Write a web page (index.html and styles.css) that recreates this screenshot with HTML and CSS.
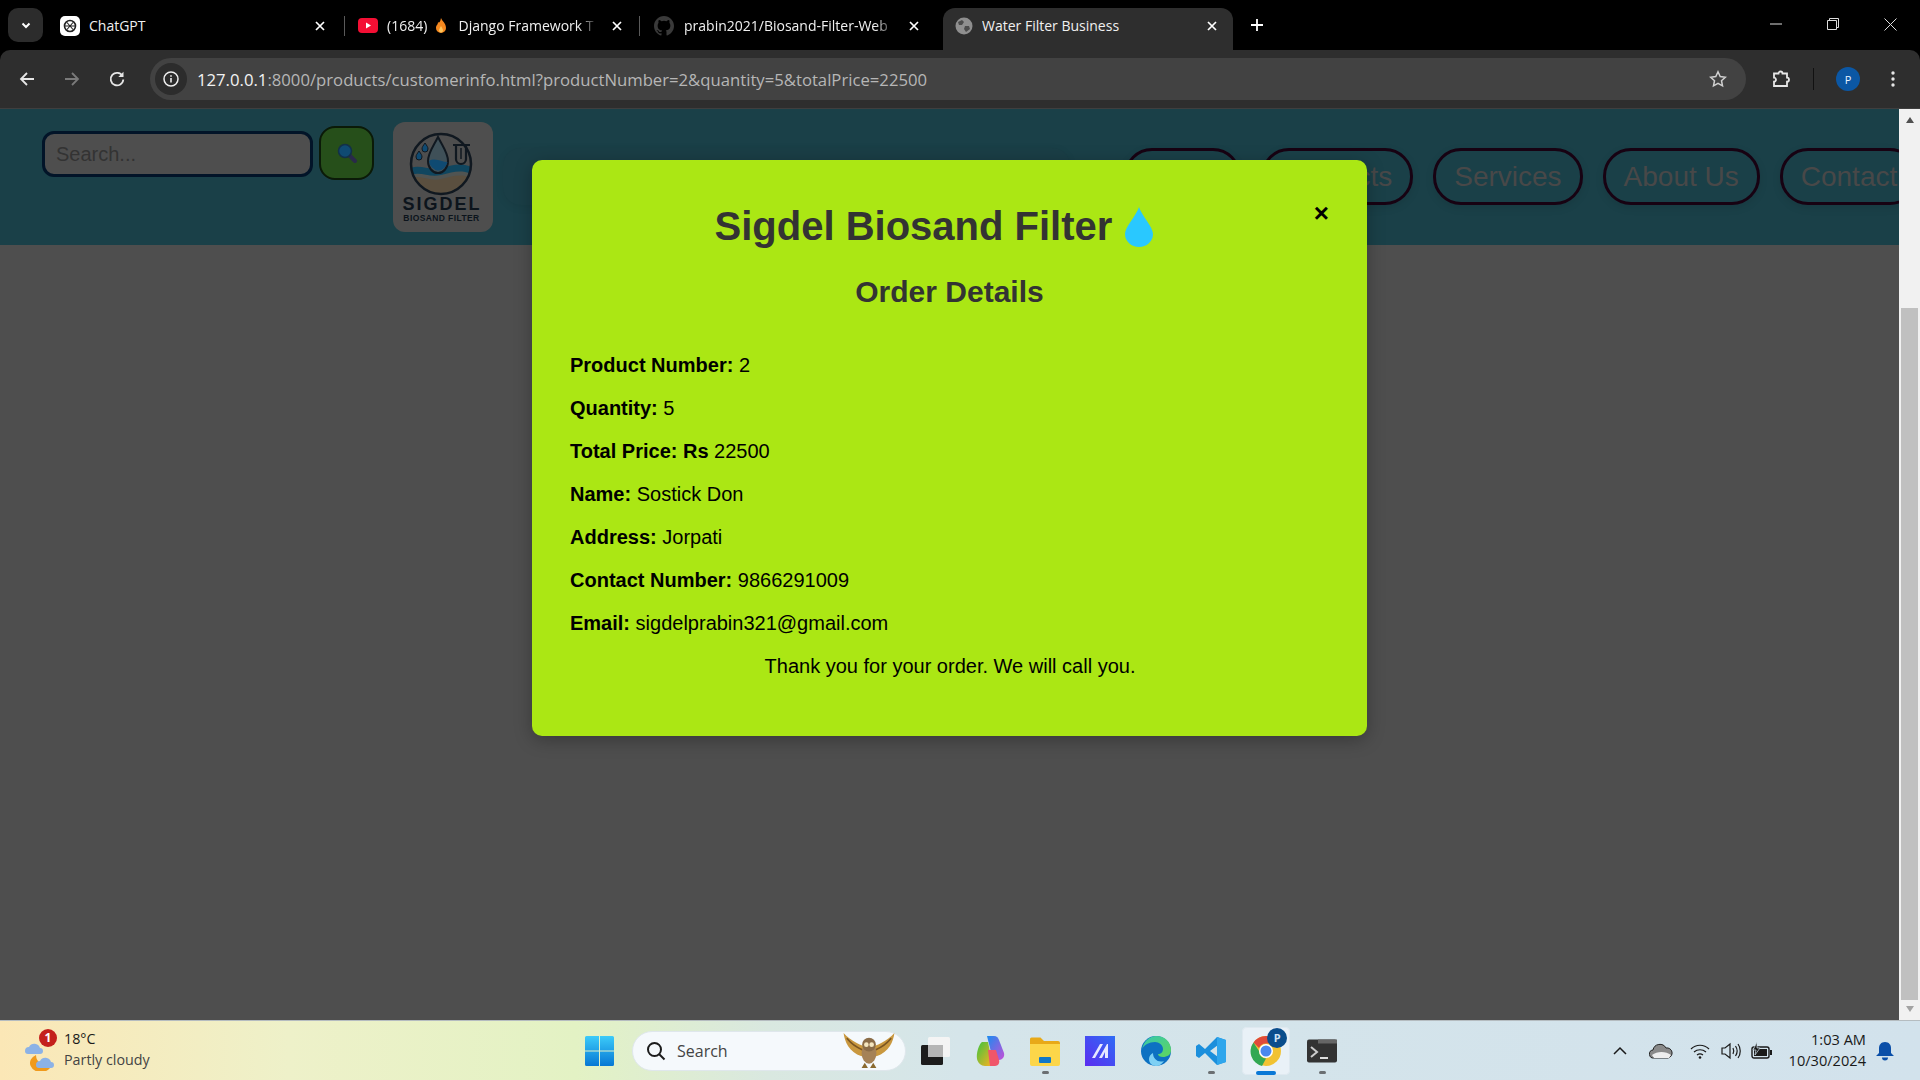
FILE: index.html
```html
<!DOCTYPE html>
<html lang="en">
<head>
<meta charset="utf-8">
<title>Water Filter Business</title>
<link rel="stylesheet" href="styles.css">
</head>
<body>
<div class="screen">
  <div class="tabstrip">
    <div class="tab-menu"><svg width="12" height="12" viewBox="0 0 12 12"><path d="M2.5 4.5 6 8l3.5-3.5" fill="none" stroke="#fff" stroke-width="2"/></svg></div>
    <div class="tab tab-1">
      <svg class="fav" width="20" height="20" viewBox="0 0 20 20"><rect width="20" height="20" rx="5" fill="#fff"/><circle cx="10" cy="10" r="5.5" fill="none" stroke="#222" stroke-width="1.6"/><path d="M7 6.5 13 13.5M13 6.500 7 13.500M5 10h10" stroke="#222" stroke-width="1.1"/></svg>
      <span class="tab-title">ChatGPT</span>
      <svg class="x" width="12" height="12" viewBox="0 0 12 12"><path d="M2 2l8 8M10 2l-8 8" stroke="#fff" stroke-width="1.700"/></svg>
    </div>
    <div class="tab-sep"></div>
    <div class="tab tab-2">
      <svg class="fav" width="20" height="15" viewBox="0 0 20 15"><rect width="20" height="15" rx="4" fill="#f40f34"/><path d="M8 4.500 13 7.500 8 10.500z" fill="#fff"/></svg>
      <span class="tab-title fade">(1684) <svg class="flame" width="12" height="16" viewBox="0 0 12 16"><path d="M6 0c1 3 5 5 5 10a5 5 0 0 1-10 0C1 7 3 7 3 4c1 1 2 1 3-4z" fill="#f5881f"/><path d="M6 8c1 2 2 3 2 4.500a2 2 0 0 1-4 0C4 11 5 10 6 8z" fill="#fdc45a"/></svg> Django Framework T</span>
      <svg class="x x-gap" width="12" height="12" viewBox="0 0 12 12"><path d="M2 2l8 8M10 2l-8 8" stroke="#fff" stroke-width="1.700"/></svg>
    </div>
    <div class="tab-sep"></div>
    <div class="tab tab-3">
      <svg class="fav" width="20" height="20" viewBox="0 0 16 16"><path fill="#3a3a3a" d="M8 0C3.600 0 0 3.600 0 8c0 3.500 2.300 6.500 5.500 7.600.4.100.5-.2.500-.4v-1.400c-2.200.5-2.700-1-2.700-1-.4-.9-.9-1.200-.9-1.200-.7-.5.100-.5.100-.5.800.1 1.200.8 1.200.8.700 1.200 1.900.9 2.300.7.100-.5.300-.9.500-1.100-1.800-.2-3.600-.9-3.600-4 0-.9.300-1.600.8-2.100-.1-.2-.4-1 .1-2.100 0 0 .7-.2 2.200.8a7.600 7.600 0 0 1 4 0c1.500-1 2.200-.8 2.200-.8.400 1.100.200 1.900.1 2.100.5.600.8 1.300.8 2.100 0 3.100-1.900 3.700-3.700 3.900.3.300.6.800.6 1.500v2.200c0 .2.100.5.600.4C13.700 14.500 16 11.500 16 8c0-4.400-3.600-8-8-8z"/></svg>
      <span class="tab-title fade">prabin2021/Biosand-Filter-Web</span>
      <svg class="x x-gap" width="12" height="12" viewBox="0 0 12 12"><path d="M2 2l8 8M10 2l-8 8" stroke="#fff" stroke-width="1.700"/></svg>
    </div>
    <div class="tab tab-active">
      <svg class="fav" width="18" height="18" viewBox="0 0 18 18"><circle cx="9" cy="9" r="8.500" fill="#8f8f8f"/><path d="M3 5l4-2 2 2-2 3-3 0zM10 9l4 0 1 3-4 3-2-3z" fill="#4b4b4b"/></svg>
      <span class="tab-title">Water Filter Business</span>
      <svg class="x" width="12" height="12" viewBox="0 0 12 12"><path d="M2 2l8 8M10 2l-8 8" stroke="#fff" stroke-width="1.700"/></svg>
    </div>
    <svg class="new-tab" width="14" height="14" viewBox="0 0 14 14"><path d="M7 1v12M1 7h12" stroke="#fff" stroke-width="1.800"/></svg>
    <div class="win-controls">
      <svg width="12" height="12" viewBox="0 0 12 12"><path d="M0 6h12" stroke="#ddd" stroke-width="1"/></svg>
      <svg width="12" height="12" viewBox="0 0 12 12"><path d="M.5 2.500h9v9h-9zM2.500 2.500v-2h9v9h-2" fill="none" stroke="#ddd" stroke-width="1"/></svg>
      <svg width="13" height="13" viewBox="0 0 13 13"><path d="M.5.500l12 12M12.500.500l-12 12" stroke="#ddd" stroke-width="1"/></svg>
    </div>
  </div>

  <div class="toolbar">
    <svg class="tool" width="18" height="18" viewBox="0 0 18 18"><path d="M16 9H3M9 3 3 9l6 6" fill="none" stroke="#e6e6e6" stroke-width="1.800"/></svg>
    <svg class="tool" width="18" height="18" viewBox="0 0 18 18"><path d="M2 9h13M9 3l6 6-6 6" fill="none" stroke="#7a7a7a" stroke-width="1.800"/></svg>
    <svg class="tool" width="18" height="18" viewBox="0 0 18 18"><path d="M14.500 6A6.300 6.300 0 1 0 15.300 9.500" fill="none" stroke="#e6e6e6" stroke-width="1.800"/><path d="M15.500 1.800V7H10.300z" fill="#e6e6e6"/></svg>
    <div class="omnibox">
      <span class="site-info"><svg width="16" height="16" viewBox="0 0 16 16"><circle cx="8" cy="8" r="7" fill="none" stroke="#eee" stroke-width="1.500"/><path d="M8 7v4.500M8 4.200v1.600" stroke="#eee" stroke-width="1.600"/></svg></span>
      <span class="url"><span class="url-host">127.0.0.1</span>:8000/products/customerinfo.html?productNumber=2&amp;quantity=5&amp;totalPrice=22500</span>
      <svg class="star" width="18" height="18" viewBox="0 0 18 18"><path d="M9 1.800l2.200 4.800 5.100.6-3.800 3.500 1 5.100L9 13.300l-4.500 2.500 1-5.100L1.700 7.200l5.100-.6z" fill="none" stroke="#d0d0d0" stroke-width="1.500"/></svg>
    </div>
    <svg class="puzzle" width="20" height="20" viewBox="0 0 20 20"><path d="M3 4.500h4.500a2 2 0 0 1 4 0H16v4.200a2 2 0 0 1 0 4V17H3v-4.300a2 2 0 0 0 0-4z" fill="none" stroke="#e6e6e6" stroke-width="1.800"/></svg>
    <div class="tool-sep"></div>
    <div class="avatar">P</div>
    <svg class="kebab" width="4" height="18" viewBox="0 0 4 18"><circle cx="2" cy="3" r="1.700" fill="#e6e6e6"/><circle cx="2" cy="9" r="1.700" fill="#e6e6e6"/><circle cx="2" cy="15" r="1.700" fill="#e6e6e6"/></svg>
  </div>

  <div class="viewport">
    <div class="page">
      <header class="site-header">
        <form class="search">
          <div class="search-input">Search...</div>
          <div class="search-btn"><svg width="22" height="22" viewBox="0 0 22 22"><path d="M13 13l6 6" stroke="#2a2a4a" stroke-width="4" stroke-linecap="round"/><circle cx="9" cy="9" r="6.500" fill="#0f4a72" stroke="#133048" stroke-width="1.500"/></svg></div>
        </form>
        <div class="logo">
          <svg class="logo-mark" width="76" height="78" viewBox="0 0 76 78">
            <defs><clipPath id="lc"><circle cx="38" cy="39" r="29.500"/></clipPath></defs>
            <g clip-path="url(#lc)">
              <path d="M5 44c12-6 20 2 33-1s20-6 33 0v30H5z" fill="#10465f"/>
              <path d="M5 51c12-6 20 2 33-1s20-6 33 0v24H5z" fill="#505452"/>
              <path d="M5 54c12-6 20 3 33 0s20-6 33 0v22H5z" fill="#5a4f3f"/>
            </g>
            <circle cx="38" cy="39" r="30" fill="none" stroke="#101820" stroke-width="2.500"/>
            <path d="M35 12c5 10 10 16 10 24a10 12 0 0 1-20 0c0-8 5-14 10-24z" fill="#3f5058" stroke="#101820" stroke-width="2"/>
            <path d="M26 36c6-4 13 1 18.500 1a9.500 11.500 0 0 1-18.500-1z" fill="#0f4a72"/>
            <path d="M22 18c2 3 3 4 3 6a3 3 0 0 1-6 0c0-2 1-3 3-6zM16 26c2 3 3 4 3 6a3 3 0 0 1-6 0c0-2 1-3 3-6z" fill="#0f4a72" stroke="#101820" stroke-width="1"/>
            <path d="M50 20h17M53 21v13a5 5 0 0 0 10 0V21" fill="none" stroke="#101820" stroke-width="2.200"/>
            <path d="M58 23v11" stroke="#101820" stroke-width="1.500"/>
          </svg>
          <div class="logo-name">SIGDEL</div>
          <div class="logo-sub">BIOSAND FILTER</div>
        </div>
        <div class="ghost-pill"></div>
        <nav class="nav">
          <a class="pill">Home</a>
          <a class="pill">Products</a>
          <a class="pill">Services</a>
          <a class="pill">About Us</a>
          <a class="pill">Contact</a>
        </nav>
      </header>
      <section class="modal">
        <span class="close">×</span>
        <h1 class="modal-title">Sigdel Biosand Filter <svg class="drop" width="30" height="40" viewBox="0 0 30 40"><path d="M15 0c3 9 14 20 14 27a14 13 0 0 1-28 0C1 20 12 9 15 0z" fill="#29c8ff"/></svg></h1>
        <h2 class="modal-sub">Order Details</h2>
        <p class="row first"><strong>Product Number:</strong> 2</p>
        <p class="row"><strong>Quantity:</strong> 5</p>
        <p class="row"><strong>Total Price: Rs</strong> 22500</p>
        <p class="row"><strong>Name:</strong> Sostick Don</p>
        <p class="row"><strong>Address:</strong> Jorpati</p>
        <p class="row"><strong>Contact Number:</strong> 9866291009</p>
        <p class="row"><strong>Email:</strong> sigdelprabin321@gmail.com</p>
        <p class="row thanks">Thank you for your order. We will call you.</p>
      </section>
    </div>
    <div class="scrollbar">
      <svg class="arrow" width="10" height="8" viewBox="0 0 10 8"><path d="M5 1l4 6H1z" fill="#505050"/></svg>
      <div class="track"><div class="thumb"></div></div>
      <svg class="arrow" width="10" height="8" viewBox="0 0 10 8"><path d="M1 1h8L5 7z" fill="#a3a3a3"/></svg>
    </div>
  </div>

  <footer class="taskbar">
    <div class="weather">
      <div class="weather-icon">
        <svg width="34" height="36" viewBox="0 0 34 36"><path d="M12 20a11 9 0 1 0 16 8 10 10 0 0 1-16-8z" fill="#f09a1c"/><path d="M1 16a4 4 0 0 1 4-4 6 6 0 0 1 11 1 3 3 0 0 1 0 6H4a3 3 0 0 1-3-3z" fill="#8cb2e6"/><path d="M12 30a4 4 0 0 1 4-4 6 6 0 0 1 11 1 3 3 0 0 1 0 6H15a3 3 0 0 1-3-3z" fill="#8cb2e6"/></svg>
        <span class="badge">1</span>
      </div>
      <div class="weather-text"><div class="temp">18°C</div><div class="cond">Partly cloudy</div></div>
    </div>
    <div class="apps">
      <svg class="start" width="29" height="30" viewBox="0 0 29 30"><defs><linearGradient id="win" x1="0" y1="0" x2="0" y2="1"><stop offset="0" stop-color="#3ccbf9"/><stop offset="1" stop-color="#0677d4"/></linearGradient></defs><path fill="url(#win)" d="M0 1.500A1.500 1.500 0 0 1 1.500 0H14v14.500H0zM15 0h12.500A1.500 1.500 0 0 1 29 1.500v13H15zM0 15.500h14V30H1.500A1.500 1.500 0 0 1 0 28.500zM15 15.500h14v13a1.500 1.500 0 0 1-1.500 1.500H15z"/></svg>
      <div class="task-search">
        <svg width="20" height="20" viewBox="0 0 20 20"><circle cx="8.500" cy="8.500" r="6.500" fill="none" stroke="#1c1c1c" stroke-width="2"/><path d="M13 13l5.500 5.500" stroke="#1c1c1c" stroke-width="2"/></svg>
        <span class="task-search-label">Search</span>
        <svg class="owl" width="56" height="36" viewBox="0 0 50 34"><path d="M25 14C18 12 8 8 1 0c1 8 5 18 17 22zM25 14c7-2 17-6 24-14-1 8-5 18-17 22z" fill="#c9983f"/><path d="M4 5c5 6 10 9 15 11M46 5c-5 6-10 9-15 11" stroke="#7a5522" stroke-width="1.500" fill="none"/><ellipse cx="25" cy="19" rx="7" ry="10" fill="#a58257"/><circle cx="25" cy="11" r="6.500" fill="#8a6c48"/><circle cx="22.500" cy="11" r="2.200" fill="#f4e6c0"/><circle cx="27.500" cy="11" r="2.200" fill="#f4e6c0"/><path d="M21 28l-3 5h6zM29 28l-3 5h6z" fill="#8a6a30"/></svg>
      </div>
      <div class="app">
        <svg width="30" height="30" viewBox="0 0 30 30"><rect x="1" y="9" width="22" height="20" rx="1.500" fill="#1c1c1c"/><rect x="8" y="1" width="22" height="20" rx="1.500" fill="#f4f4f4"/><rect x="8" y="9" width="15" height="12" fill="#b5b5b5"/></svg>
      </div>
      <div class="app">
        <svg width="30" height="32" viewBox="0 0 30 32"><defs><linearGradient id="cp1" x1="0" y1="0" x2="1" y2="1"><stop offset="0" stop-color="#1a8cf0"/><stop offset="1" stop-color="#c64fd8"/></linearGradient><linearGradient id="cp2" x1="0" y1="0" x2="1" y2="1"><stop offset="0" stop-color="#3ec43e"/><stop offset="1" stop-color="#ffb020"/></linearGradient></defs><path d="M12 1h7c3 0 4 2 5 4l5 13c1 4-2 7-5 7h-6z" fill="url(#cp1)"/><path d="M7 7h6l5 24h-8c-4 0-7-3-8-7-1-6 2-15 5-17z" fill="url(#cp2)"/><path d="M13 15h8l3 10c1 3-1 6-4 6h-5z" fill="#f0566a"/></svg>
      </div>
      <div class="app has-dot">
        <svg width="30" height="30" viewBox="0 0 30 30"><path d="M0 3a1.500 1.500 0 0 1 1.500-1.500h9L14 5h14a2 2 0 0 1 2 2v3H0z" fill="#e8a918"/><path d="M0 8h30v20a2 2 0 0 1-2 2H2a2 2 0 0 1-2-2z" fill="#fcd649"/><rect x="9" y="21" width="12" height="6" rx="1" fill="#1078c8"/></svg>
      </div>
      <div class="app">
        <svg width="30" height="30" viewBox="0 0 30 30"><defs><linearGradient id="mn" x1="1" y1="0" x2="0" y2="1"><stop offset="0" stop-color="#2f6cf5"/><stop offset="1" stop-color="#5b2cf0"/></linearGradient></defs><rect width="30" height="30" fill="url(#mn)"/><path d="M7 22l8-14h3l-8 14zM14 22l8-14h1v14h-3v-6l-3 6z" fill="#e6e8ff"/></svg>
      </div>
      <div class="app">
        <svg width="30" height="30" viewBox="0 0 30 30"><defs><linearGradient id="ed" x1="0" y1="0" x2="1" y2="1"><stop offset="0" stop-color="#36c7b0"/><stop offset="1" stop-color="#5fd65c"/></linearGradient></defs><circle cx="15" cy="15" r="15" fill="#0d71c2"/><path d="M1 13C3 5 9 0 15 0c9 0 15 6 15 14 0 5-4 7-8 7-3 0-5-1-5-3 3 0 5-2 5-5 0-4-4-7-8-7-6 0-11 3-13 7z" fill="url(#ed)"/><path d="M12 17c0 6 5 10 11 8-2 3-5 5-8 5-4 0-7-3-7-7 0-3 2-5 4-6z" fill="#7ed0f4"/></svg>
      </div>
      <div class="app has-dot">
        <svg width="30" height="30" viewBox="0 0 30 30"><path d="M21 1 9 13 3 8 0 10v10l3 2 6-5 12 12 9-3V4zM22 9v12l-8-6z" fill="#1b8fdc"/><path d="M21 1l9 3v22l-9 3z" fill="#2fa6ec"/></svg>
      </div>
      <div class="app app-active">
        <svg width="32" height="32" viewBox="0 0 32 32"><circle cx="16" cy="16" r="15" fill="#f1c232"/><path d="M16 1a15 15 0 0 1 13 7.500H16a7.500 7.500 0 0 0-7 4.500L3.500 7.500A15 15 0 0 1 16 1z" fill="#e04a3a"/><path d="M3.500 7.500 9 16a7.500 7.500 0 0 0 7 7.500L12 31A15 15 0 0 1 3.500 7.500z" fill="#33a853"/><circle cx="16" cy="16" r="7" fill="#fff"/><circle cx="16" cy="16" r="5.500" fill="#4a88ee"/></svg>
        <span class="chrome-badge">P</span>
      </div>
      <div class="app has-dot">
        <svg width="30" height="30" viewBox="0 0 30 30"><rect y="3.500" width="30" height="23" rx="2" fill="#333"/><rect x="11" y="3.500" width="19" height="4" fill="#666"/><path d="M4 11l6 5-6 5" fill="none" stroke="#ccc" stroke-width="2"/><path d="M13 22h8" stroke="#ddd" stroke-width="2"/></svg>
      </div>
    </div>
    <div class="tray">
      <svg class="t-chevron" width="14" height="9" viewBox="0 0 14 9"><path d="M1 8l6-6 6 6" fill="none" stroke="#1a1a1a" stroke-width="1.500"/></svg>
      <svg class="t-cloud" width="24" height="16" viewBox="0 0 24 16"><path d="M5 15a4 4 0 0 1-1-8 7 7 0 0 1 13-2 5 5 0 0 1 2 10z" fill="#8a8a8a" stroke="#222" stroke-width="1"/><path d="M3 12c5-4 14-4 19 0l-2 3H5z" fill="#eee"/></svg>
      <svg class="t-wifi" width="20" height="16" viewBox="0 0 20 16"><path d="M1 6c5-5 13-5 18 0M4 9c3.500-3 8.500-3 12 0M7 12c2-1.500 4-1.500 6 0" fill="none" stroke="#1a1a1a" stroke-width="1.200"/><circle cx="10" cy="14.500" r="1.300" fill="#1a1a1a"/></svg>
      <svg class="t-vol" width="20" height="18" viewBox="0 0 20 18"><path d="M1 6h3l5-4v14l-5-4H1z" fill="none" stroke="#1a1a1a" stroke-width="1.200"/><path d="M12 6c1 2 1 4 0 6M14.500 4c2 3 2 7 0 10M17 2c3 4 3 10 0 14" fill="none" stroke="#1a1a1a" stroke-width="1.200"/></svg>
      <svg class="t-batt" width="22" height="18" viewBox="0 0 22 18"><rect x="1" y="5" width="17" height="11" rx="2" fill="none" stroke="#1a1a1a" stroke-width="1.400"/><rect x="3" y="7" width="13" height="7" fill="#1a1a1a"/><rect x="19" y="8" width="2" height="5" fill="#1a1a1a"/><path d="M6 0 2 8h3l-1 5 5-7H6z" fill="#1a1a1a" stroke="#d2e2ec" stroke-width=".7"/></svg>
      <div class="clock"><div>1:03 AM</div><div>10/30/2024</div></div>
      <svg class="t-bell" width="18" height="20" viewBox="0 0 18 20"><path d="M9 1c4 0 6 3 6 6v5l3 3H0l3-3V7c0-3 2-6 6-6z" fill="#0b4fa8"/><path d="M6 16.500h6a3 3 0 0 1-6 0z" fill="#0b4fa8"/></svg>
    </div>
  </footer>
</div>
</body>
</html>
```

FILE: styles.css
```css
* { box-sizing: border-box; }
html, body { margin: 0; height: 100%; overflow: hidden; }
body { font-family: "Liberation Sans", Arial, sans-serif; background: #000; }
.screen { width: 1920px; height: 1080px; display: flex; flex-direction: column; }

/* Browser tab strip */
.tabstrip { height: 50px; flex: none; background: #000; display: flex; align-items: flex-end; position: relative; font-family: "Open Sans", sans-serif; font-size: 14px; color: #f0f0f0; }
.tab-menu { width: 35px; height: 34px; margin: 0 5px 8px 8px; border-radius: 10px; background: #2c2c2c; display: flex; align-items: center; justify-content: center; flex: none; }
.tab { height: 42px; display: flex; align-items: center; flex: none; padding-bottom: 7px; }
.tab-1 { width: 296px; padding-left: 12px; padding-right: 18px; }
.tab-2 { width: 294px; padding-left: 13px; padding-right: 16px; }
.tab-3 { width: 303px; padding-left: 14px; padding-right: 23px; }
.tab-3 .fav { margin-right: 10px; }
.tab-active { width: 290px; padding-left: 12px; padding-right: 15px; background: #2e2e2e; border-radius: 12px 12px 0 0; }
.tab-sep { width: 1px; height: 20px; background: #5a5a5a; margin-bottom: 14px; flex: none; }
.fav { flex: none; margin-right: 9px; }
.tab-title { flex: 1; white-space: nowrap; overflow: hidden; min-width: 0; }
.flame { vertical-align: -3px; margin: 0 8px 0 4px; }
.fade { -webkit-mask-image: linear-gradient(to right, #000 90%, transparent); mask-image: linear-gradient(to right, #000 90%, transparent); }
.x { flex: none; }
.x-gap { margin-left: 12px; }
.new-tab { margin: 0 0 18px 17px; flex: none; }
.win-controls { margin-left: auto; height: 50px; display: flex; align-items: center; gap: 45px; padding-right: 23px; padding-bottom: 2px; }

/* Browser toolbar */
.toolbar { height: 59px; flex: none; background: #2e2e2e; border-radius: 10px 10px 0 0; display: flex; align-items: center; padding-left: 18px; border-bottom: 1px solid #3f3f3f; }
.tool { flex: none; margin-right: 27px; }
.omnibox { width: 1596px; height: 42px; margin-left: -3px; border-radius: 21px; background: #424242; display: flex; align-items: center; padding: 0 19px 0 5px; flex: none; font-family: "Open Sans", sans-serif; font-size: 16.690px; color: #b6b6b6; }
.site-info { width: 32px; height: 32px; border-radius: 50%; background: #2c2c2c; display: flex; align-items: center; justify-content: center; flex: none; margin-right: 10px; }
.url { flex: 1; white-space: nowrap; overflow: hidden; }
.url-host { color: #f2f2f2; }
.star { flex: none; }
.puzzle { margin-left: 25px; flex: none; }
.tool-sep { width: 1px; height: 22px; background: #111; margin-left: 22px; flex: none; }
.avatar { width: 24px; height: 24px; margin-left: 22px; border-radius: 50%; background: #0b57a4; color: #eaf2ff; font-family: "Open Sans", sans-serif; font-size: 11px; display: flex; align-items: center; justify-content: center; flex: none; }
.kebab { margin-left: 31px; flex: none; }

/* Viewport */
.viewport { flex: 1; min-height: 0; display: flex; }
.page { flex: 1; min-width: 0; position: relative; overflow: hidden; background: #4e4e4e; }
.scrollbar { width: 21px; flex: none; background: #f1f1f1; display: flex; flex-direction: column; align-items: center; padding: 7px 0 7px; }
.arrow { flex: none; }
.track { flex: 1; width: 100%; padding: 184px 2px 5px; }
.thumb { height: 100%; background: #c0c0c0; }

/* Site header */
.site-header { height: 136px; background: #1a4048; display: flex; align-items: flex-start; padding-left: 42px; }
.search { display: flex; gap: 6px; align-items: center; margin-top: 17px; flex: none; }
.search-input { width: 271px; height: 46px; margin-top: 1px; border: 3px solid #021428; border-radius: 12px; background: #4e4e4e; color: #333; font-size: 20px; line-height: 40px; padding-left: 11px; }
.search-btn { width: 55px; height: 54px; border: 2px solid #0b1a08; border-radius: 16px; background: #264f1a; display: flex; align-items: center; justify-content: center; }
.logo { width: 100px; height: 110px; margin: 13px 0 0 19px; border-radius: 12px; background: #4e4e4e; display: flex; flex-direction: column; align-items: center; flex: none; padding-top: 3px; color: #0c141c; }
.logo-mark { flex: none; margin: 0 4px -7px 0; }
.logo-name { font-weight: 700; font-size: 18px; line-height: 17px; letter-spacing: 2px; margin-right: 2px; }
.logo-sub { font-weight: 700; font-size: 8.500px; line-height: 10px; letter-spacing: .4px; margin-right: 3px; }
.ghost-pill { width: 567px; height: 57px; margin: 39px 0 0 10px; flex: none; border-radius: 18px; background: #1a3e46; box-shadow: 0 2px 8px rgba(0,0,0,.08); }
.nav { display: flex; gap: 20px; margin: 39px 0 0 54px; flex: none; }
.pill { height: 57px; padding: 0 18px; border: 3px solid #170212; border-radius: 28px; color: #484848; font-size: 28px; line-height: 51px; white-space: nowrap; box-shadow: 0 3px 8px rgba(0,0,0,.1); flex: none; }

/* Order modal */
.modal { position: absolute; left: 532px; top: 51px; width: 835px; height: 576px; padding: 0 37px; background: #abe714; border-radius: 10px; box-shadow: 0 4px 18px rgba(0,0,0,.28); color: #000; }
.close { float: right; width: 29px; margin: 37px 1px 0 0; font-size: 26px; line-height: 32px; font-weight: 700; text-align: right; }
.modal-title { margin: 0; padding-top: 43px; text-align: center; color: #333; font-size: 40px; line-height: 46px; font-weight: 700; }
.drop { vertical-align: -7px; margin-left: 1px; }
.modal-sub { margin: 25px 0 0; text-align: center; color: #333; font-size: 30px; line-height: 35px; font-weight: 700; }
.row { margin: 20px 0 0; padding-left: 1px; font-size: 20px; line-height: 23px; }
.row.first { margin-top: 45px; }
.thanks { text-align: center; }

/* Windows taskbar */
.taskbar { height: 60px; flex: none; border-top: 1px solid #b5bcc0; background: linear-gradient(90deg, #fbe7b6 0, #eef1c9 15%, #e3f2c4 30%, #d9e8e0 40%, #d5e5ea 50%, #d2e2ec 100%); display: grid; grid-template-columns: 585px auto 1fr; align-items: center; color: #1a1a1a; font-family: "Open Sans", sans-serif; }
.weather { display: flex; align-items: center; padding-left: 24px; }
.weather-icon { position: relative; width: 40px; height: 40px; display: flex; align-items: flex-end; flex: none; }
.badge { position: absolute; left: 15px; top: -2px; width: 18px; height: 18px; border-radius: 50%; background: #c4201c; color: #fff; font-size: 12px; font-weight: 700; display: flex; align-items: center; justify-content: center; }
.weather-text { font-size: 14.300px; line-height: 21px; margin-top: -4px; }
.cond { color: #444; }
.apps { display: flex; align-items: center; }
.start { flex: none; margin-right: 18px; }
.task-search { width: 274px; height: 40px; border-radius: 20px; background: #f5f9fc; border: 1px solid #dfe7ec; display: flex; align-items: center; padding: 0 8px 0 13px; font-size: 16px; color: #444; flex: none; margin-right: 1px; }
.task-search-label { flex: 1; padding-left: 11px; }
.owl { flex: none; }
.app { width: 48px; height: 48px; margin: 0 3.650px; display: flex; align-items: center; justify-content: center; position: relative; flex: none; }
.has-dot::after { content: ""; position: absolute; left: 50%; bottom: 1px; width: 7px; height: 3px; margin-left: -3px; border-radius: 2px; background: #6b6f72; }
.app-active { background: #e9f1f7; border-radius: 5px; box-shadow: 0 0 0 1px #dfe9f0 inset; }
.app-active::after { content: ""; position: absolute; left: 50%; bottom: 0; width: 20px; height: 4px; margin-left: -10px; border-radius: 2px; background: #0a78d6; }
.chrome-badge { position: absolute; left: 25px; top: 1px; width: 20px; height: 20px; border-radius: 50%; background: #0b4d8c; color: #cfe2f5; font-size: 11px; font-weight: 700; display: flex; align-items: center; justify-content: center; }
.tray { display: flex; align-items: center; justify-content: flex-end; padding-right: 26px; }
.t-chevron { margin-right: 22px; flex: none; }
.t-cloud { margin-right: 17px; flex: none; }
.t-wifi { margin-right: 11px; flex: none; }
.t-vol { margin-right: 10px; flex: none; }
.t-batt { margin-right: 16px; flex: none; }
.clock { font-size: 14.600px; line-height: 21px; text-align: right; margin-top: -2px; }
.t-bell { margin-left: 10px; flex: none; }
```
